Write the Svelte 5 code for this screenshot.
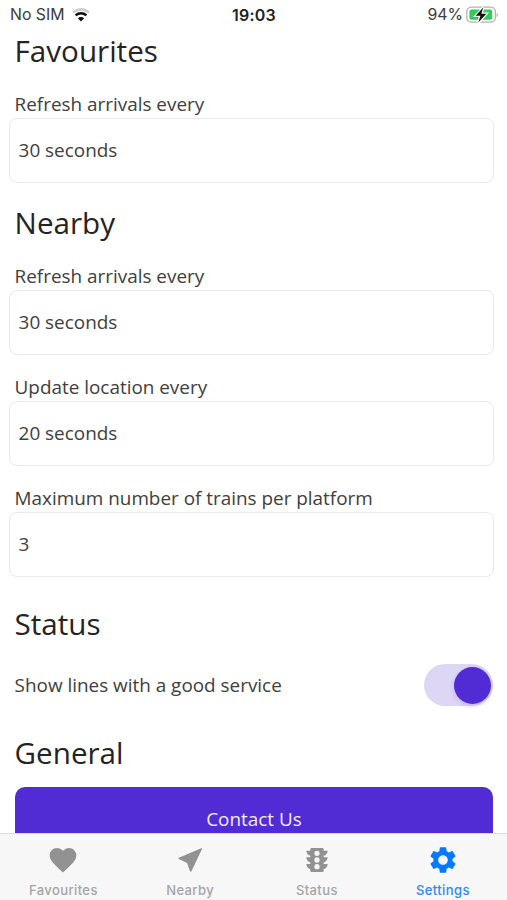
<script>
  const tabs = ['Favourites', 'Nearby', 'Status', 'Settings'];
  const nearby = [
    { label: 'Refresh arrivals every', value: '30 seconds' },
    { label: 'Update location every', value: '20 seconds' },
    { label: 'Maximum number of trains per platform', value: '3' }
  ];

  let active = 'Settings';
  let goodService = true;
</script>

<style>
  :global(body) {
    overflow: hidden;
    background: #fff;
  }

  .app {
    display: flex;
    flex-direction: column;
    height: 900px;

    font-family: "Open Sans", sans-serif;
    font-size: 18.9px;
    line-height: 25.8px;
    color: #404040;
  }

  .status-bar {
    display: grid;
    grid-template-columns: 1fr auto 1fr;
    align-items: center;
    flex: none;
    height: 30px;
    padding: 0 9px 0 10px;

    font-family: Inter, sans-serif;
    font-size: 15.8px;
    line-height: 30px;
    color: #3c3c3c;
  }

  .carrier, .battery {
    display: flex;
    align-items: center;
  }

  .carrier {
    gap: 8px;
  }

  .battery {
    justify-content: flex-end;
    gap: 3px;
  }

  .clock {
    font-size: 16px;
    font-weight: 600;
    letter-spacing: .2px;
    color: #222;
  }

  main {
    flex: 1;
    min-height: 0;
    overflow: hidden;
    padding: 1.4px 13.6px 0 14.6px;
  }

  h2 {
    margin: 0;
    font-size: 29.6px;
    font-weight: 400;
    line-height: 40.4px;
    color: #242424;
  }

  .field {
    display: block;
    margin: 20.2px 0;
  }

  .box {
    display: flex;
    align-items: center;
    box-sizing: border-box;
    height: 65.2px;
    margin: 0 -.4px 0 -5.6px;
    padding: 1.5px 8.6px 0;
    border: 1.5px solid #e9e9e9;
    border-radius: 8px;
  }

  .status-title {
    margin-top: 26.6px;
  }

  .row {
    display: flex;
    align-items: center;
    justify-content: space-between;
    height: 42px;
    margin: 20.2px 0 26.6px;
  }

  .row > span {
    padding-top: 1.4px;
  }

  .switch {
    display: flex;
    align-items: center;
    box-sizing: border-box;
    width: 69px;
    height: 42px;
    padding: 0 2px;
    border: 0;
    border-radius: 21px;
    background: #ddd6f5;
  }

  .knob {
    width: 37px;
    height: 37px;
    border-radius: 50%;
    background: #512bd4;
    box-shadow: 0 2px 5px rgba(81, 43, 212, .2);
  }

  .switch.on {
    justify-content: flex-end;
  }

  .contact {
    display: block;
    width: 100%;
    height: 65px;
    margin-top: 13.8px;
    padding: 1px 0 0;
    border: 0;
    border-radius: 10px;

    font: inherit;
    color: #f1edfc;
    background: #512bd4;
  }

  nav {
    display: grid;
    grid-template-columns: repeat(4, 1fr);
    box-sizing: border-box;
    flex: none;
    height: 67px;
    border-top: 1.4px solid #dcdcdc;
    background: #f7f7f7;
  }

  .tab {
    display: flex;
    flex-direction: column;
    align-items: center;
    padding: 10px 0 0;
    border: 0;

    font-family: Inter, sans-serif;
    font-size: 13px;
    font-weight: 500;
    line-height: 16px;
    letter-spacing: .4px;
    color: #a5a5a5;
    background: none;
  }

  .tab svg {
    margin-bottom: 6px;
    fill: #929292;
  }

  .tab.active {
    padding-right: 1.5px;
    color: #2f88f5;
  }

  .tab.active svg {
    fill: #067aff;
  }
</style>

<div class="app">
  <header class="status-bar">
    <div class="carrier">
      <span>No SIM</span>
      <svg width="18" height="14" viewBox="0 0 18 14" fill="none">
        <path d="M1 4.6C5.6.3 12.4.3 17 4.6" stroke="#cfcfcf" stroke-width="2.6" />
        <path d="M3.6 7.4c3.1-2.8 7.7-2.8 10.8 0" stroke="#111" stroke-width="2.6" />
        <path d="M9 13.4 5.8 10.2c1.8-1.6 4.6-1.6 6.4 0z" fill="#111" />
      </svg>
    </div>
    <span class="clock">19:03</span>
    <div class="battery">
      <span>94%</span>
      <svg width="32" height="18" viewBox="0 0 32 18">
        <rect x=".8" y="1.2" width="28.6" height="15" rx="4.6" fill="none" stroke="#b3b3b3" stroke-width="1.3" />
        <rect x="3.4" y="3.6" width="22.8" height="10.2" rx="2" fill="#35cb5b" />
        <path d="M30.6 6.8v4.2c1.7-.8 1.7-3.4 0-4.2z" fill="#b3b3b3" />
        <path d="M17.2 1.6 9.6 9.8h4.8l-2.1 6.8L20.4 7.8h-5z" fill="#111" stroke="#fff" stroke-width="2.4" paint-order="stroke" />
      </svg>
    </div>
  </header>

  <main>
    <h2>Favourites</h2>
    <div class="field">
      <div>Refresh arrivals every</div>
      <div class="box">30 seconds</div>
    </div>

    <h2>Nearby</h2>
    {#each nearby as item}
      <div class="field">
        <div>{item.label}</div>
        <div class="box">{item.value}</div>
      </div>
    {/each}

    <h2 class="status-title">Status</h2>
    <div class="row">
      <span>Show lines with a good service</span>
      <button
        class="switch"
        class:on={goodService}
        aria-label="Show lines with a good service"
        on:click={() => goodService = !goodService}>
        <span class="knob"></span>
      </button>
    </div>

    <h2>General</h2>
    <button class="contact">Contact Us</button>
  </main>

  <nav>
    {#each tabs as tab}
      <button class="tab" class:active={active === tab} on:click={() => active = tab}>
        <svg width="32" height="32" viewBox="0 0 24 24">
          {#if tab === 'Favourites'}
            <path d="M12 21.35l-1.45-1.32C5.4 15.36 2 12.28 2 8.5 2 5.42 4.42 3 7.5 3c1.74 0 3.41.81 4.5 2.09C13.09 3.81 14.76 3 16.5 3 19.58 3 22 5.42 22 8.5c0 3.78-3.4 6.86-8.55 11.54L12 21.35z" />
          {:else if tab === 'Nearby'}
            <path d="M20.4 3.2L3.6 10.4c-.4.2-.4.7 0 .9l6.2 2.9 2.2 6.2c.2.5.9.5 1.1 0L21 3.8c.1-.4-.2-.7-.6-.6z" />
          {:else if tab === 'Status'}
            <path fill-rule="evenodd" d="M20 10h-3V8.86c1.72-.45 3-2 3-3.86h-3V4c0-.55-.45-1-1-1H8c-.55 0-1 .45-1 1v1H4c0 1.86 1.28 3.41 3 3.86V10H4c0 1.86 1.28 3.41 3 3.86V15H4c0 1.86 1.28 3.41 3 3.86V20c0 .55.45 1 1 1h8c.55 0 1-.45 1-1v-1.14c1.72-.45 3-2 3-3.86h-3v-1.14c1.72-.45 3-2 3-3.86zM12 19a2 2 0 1 1 0-4 2 2 0 0 1 0 4zM12 14a2 2 0 1 1 0-4 2 2 0 0 1 0 4zM12 9a2 2 0 1 1 0-4 2 2 0 0 1 0 4z" />
          {:else}
            <path d="M19.14 12.94c.04-.3.06-.61.06-.94 0-.32-.02-.64-.07-.94l2.03-1.58c.18-.14.23-.41.12-.61l-1.92-3.32c-.12-.22-.37-.29-.59-.22l-2.39.96c-.5-.38-1.03-.7-1.62-.94l-.36-2.54c-.04-.24-.24-.41-.48-.41h-3.84c-.24 0-.43.17-.47.41l-.36 2.54c-.59.24-1.13.57-1.62.94l-2.39-.96c-.22-.08-.47 0-.59.22L2.74 8.87c-.12.21-.08.47.12.61l2.03 1.58c-.05.3-.09.63-.09.94s.02.64.07.94l-2.03 1.58c-.18.14-.23.41-.12.61l1.92 3.32c.12.22.37.29.59.22l2.39-.96c.5.38 1.03.7 1.62.94l.36 2.54c.05.24.24.41.48.41h3.84c.24 0 .44-.17.47-.41l.36-2.54c.59-.24 1.13-.56 1.62-.94l2.39.96c.22.08.47 0 .59-.22l1.92-3.32c.12-.22.07-.47-.12-.61l-2.01-1.58zM12 15.6c-1.98 0-3.6-1.62-3.6-3.6s1.62-3.6 3.6-3.6 3.6 1.62 3.6 3.6-1.62 3.6-3.6 3.6z" />
          {/if}
        </svg>
        <span>{tab}</span>
      </button>
    {/each}
  </nav>
</div>
